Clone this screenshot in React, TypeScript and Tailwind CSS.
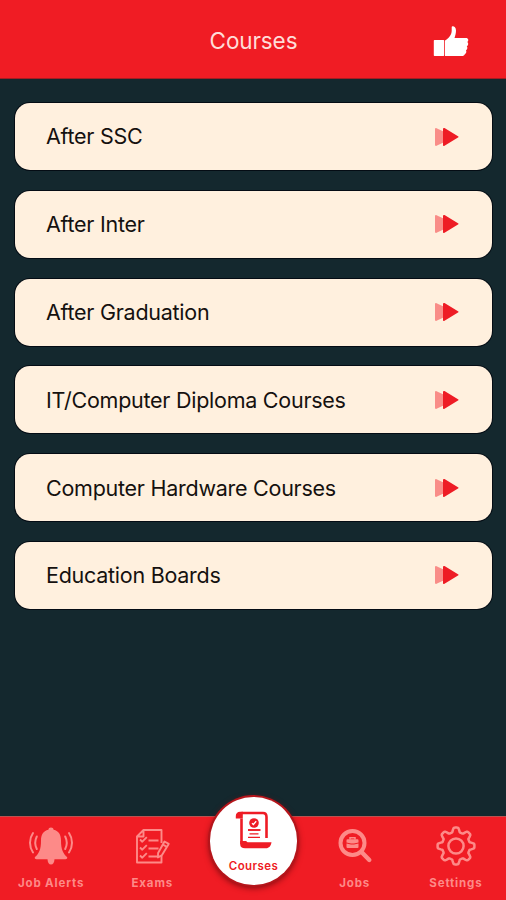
const courses = [
  "After SSC",
  "After Inter",
  "After Graduation",
  "IT/Computer Diploma Courses",
  "Computer Hardware Courses",
  "Education Boards",
];

// eight rounded teeth around (25, 20)
const gearPoints = Array.from({ length: 144 }, (_, i) => {
  const a = (i / 144) * Math.PI * 2;
  const wave = Math.max(-1, Math.min(1, Math.cos(a * 8) * 1.7));
  const r = 16.2 + wave * 2.2;
  return `${(25 + r * Math.sin(a)).toFixed(2)},${(20 - r * Math.cos(a)).toFixed(2)}`;
}).join(" ");

function BellIcon() {
  return (
    <svg width="48" height="40" viewBox="0 0 48 40" fill="none" stroke="currentColor" strokeWidth="2" strokeLinecap="round">
      <path
        d="M24 1.500c1.500 0 2.400.9 2.600 2.300C32 5 34 9 34 14.500c0 9 2 13 6 16.500.8 1-.2 2.200-1.500 2.200H9.500c-1.300 0-2.300-1.200-1.500-2.200C12 27.500 14 23.500 14 14.500 14 9 16 5 21.400 3.800 21.600 2.400 22.500 1.500 24 1.500Z"
        fill="currentColor"
        stroke="none"
      />
      <path d="M20.500 33h7c0 3.500-1.400 5.600-3.500 5.600s-3.500-2.100-3.500-5.600Z" fill="currentColor" stroke="none" />
      <path d="M9.800 10.500c-2 4-2 8.500 0 12.500M6 7c-4 5.800-4 13.500 0 19.500M38.200 10.500c2 4 2 8.500 0 12.500M42 7c4 5.800 4 13.500 0 19.500" />
    </svg>
  );
}

function ExamIcon() {
  return (
    <svg width="48" height="40" viewBox="0 0 48 40" fill="none" stroke="currentColor" strokeWidth="1.900" strokeLinejoin="round">
      <path d="M33.500 17V4H15.500L9 10.500V36.500H33.500V30M15.500 4v6.500H9" />
      <path d="m12 13.500 2.300 2.200 4.500-4.500M12 21.500l2.300 2.200 4.500-4.500M12 29.500l2.300 2.200 4.500-4.500M20.500 14.500h10M20.500 22.500h10M20.500 30.500h10" />
      <path d="m36.500 15.500 4.200 2.400-7 11.500-3.800 2 .2-4.400Z" />
      <path d="m34.800 18.500 4 2.400" />
    </svg>
  );
}

function JobIcon() {
  return (
    <svg width="48" height="40" viewBox="0 0 48 40" fill="none" stroke="currentColor">
      <circle cx="22.500" cy="17" r="12" strokeWidth="4" />
      <path d="m31.500 26 7.800 8" strokeWidth="4.400" strokeLinecap="round" />
      <path d="M20 13.500v-1.700h5v1.700" strokeWidth="1.500" />
      <path d="M17.500 13.200h10a1 1 0 0 1 1 1v2.400l-4.500 1h-3l-4.500-1v-2.400a1 1 0 0 1 1-1ZM16.500 17.500l4.500 1h3l4.500-1v3.400a1 1 0 0 1-1 1h-10a1 1 0 0 1-1-1Z" fill="currentColor" stroke="none" />
    </svg>
  );
}

function GearIcon() {
  return (
    <svg width="48" height="40" viewBox="0 0 48 40" fill="none" stroke="currentColor" strokeWidth="2.500" strokeLinejoin="round">
      <polygon points={gearPoints} />
      <circle cx="25" cy="20" r="7.600" />
    </svg>
  );
}

function CourseIcon() {
  return (
    <svg width="38" height="38" viewBox="0 0 38 38" fill="none" stroke="currentColor">
      <path d="M6.500 33V7.500M6.500 2h21.500c2.500 0 3.500 1.500 3.500 4v21" strokeWidth="2.600" />
      <path d="M.8 7.500V5C.8 2.300 2.400.7 5 .7h2.800v6.800Z" fill="currentColor" stroke="none" />
      <path d="M5.200 33.500V30h5.500c1.200 0 1 1.200 2 1.200H36.500c-.5 3.800-2.500 6-5.500 6H10c-3 0-4.800-1.200-4.800-3.700Z" fill="currentColor" stroke="none" />
      <circle cx="19" cy="12" r="4.800" fill="currentColor" stroke="none" />
      <path d="m17 12.200 1.400 1.300 2.800-3.200" stroke="white" strokeWidth="1.300" />
      <path d="M13 19h12.500" strokeWidth="1.900" />
      <path d="M14.500 22.800h9M13 26.300h12" strokeWidth="1.300" />
    </svg>
  );
}

const tabs = [
  { label: "Job Alerts", icon: <BellIcon /> },
  { label: "Exams", icon: <ExamIcon /> },
  null,
  { label: "Jobs", icon: <JobIcon /> },
  { label: "Settings", icon: <GearIcon /> },
];

export default function App() {
  return (
    <div className="flex h-[900px] w-[506px] flex-col overflow-hidden bg-[#14282e] font-['Inter',sans-serif]">
      <header className="grid h-[79px] shrink-0 grid-cols-3 items-center border-b border-[#a31d22] bg-[#f01c24] pt-[3px]">
        <div />
        <h1 className="pl-px text-center text-[22.500px] tracking-[-0.1px] text-[#ffdcd8]">Courses</h1>
        <div className="flex justify-end pr-[37px]">
          <svg width="36" height="32" viewBox="0 0 36 32" fill="white">
            <path d="M1.500 15h9a.7.7 0 0 1 .7.700V30.300a.7.7 0 0 1-.7.700h-9a.7.7 0 0 1-.7-.7V15.700a.7.700 0 0 1 .7-.7Z" />
            <path d="M12 15.500c3.500-2 6.500-5.500 6.700-9.500V2c0-1.500 4.300-1.500 4.300 3.500 0 3-.8 5-1.500 7.500H33c2.500 0 3 2.800 1.300 4 1.500 1.200 1 3.500-.5 4.200 1 1.400.6 3.200-.8 4 .8 1.800 0 3.400-1.200 4-.4 1.200-1.300 1.800-3 1.800H12Z" />
          </svg>
        </div>
      </header>

      <main className="flex flex-1 flex-col gap-[20.800px] pt-6 pr-3.500 pl-[15px]">
        {courses.map((name) => (
          <button
            key={name}
            className="flex h-[67px] w-[477px] items-center justify-between rounded-[15px] bg-[#fff0de] pr-[33px] pl-[31px] text-left text-[21.500px] tracking-[-0.26px] text-[#15110f] shadow-[0_0_0_1px_#040c14]"
          >
            {name}
            <svg width="25" height="20" viewBox="0 0 25 20">
              <path d="M1 2.200c0-1 .7-1.400 1.500-.9L9.500 4.500v11L2.500 18.700c-.8.500-1.500 0-1.500-.9Z" fill="#f98d88" />
              <path d="M9 2c0-1 .7-1.400 1.500-.9L24 9.200c.7.400.7 1 0 1.400l-13.500 8.200c-.8.500-1.500 0-1.500-.9Z" fill="#ee1c25" />
            </svg>
          </button>
        ))}
      </main>

      <nav className="relative grid h-[84px] shrink-0 grid-cols-5 border-t border-[#bb5150] bg-[#f01c24] text-[#fd8a88]">
        {tabs.map((tab, i) =>
          tab ? (
            <div key={tab.label} className="flex flex-col items-center pt-[9px]">
              {tab.icon}
              <span className="mt-[9px] pl-px text-[11.500px] leading-4 font-bold tracking-[0.850px] whitespace-nowrap">{tab.label}</span>
            </div>
          ) : (
            <div key={i} />
          )
        )}
        <div className="absolute -top-[20px] left-[210px] flex h-[88px] w-[87px] flex-col items-center rounded-full bg-white pt-[14px] text-[#ee1c25] shadow-[0_0_0_2px_#b5151b,0_2px_6px_1px_#7d0c10]">
          <CourseIcon />
          <span className="mt-[9px] text-[11.500px] leading-4 font-semibold tracking-[0.400px]">Courses</span>
        </div>
      </nav>
    </div>
  );
}
